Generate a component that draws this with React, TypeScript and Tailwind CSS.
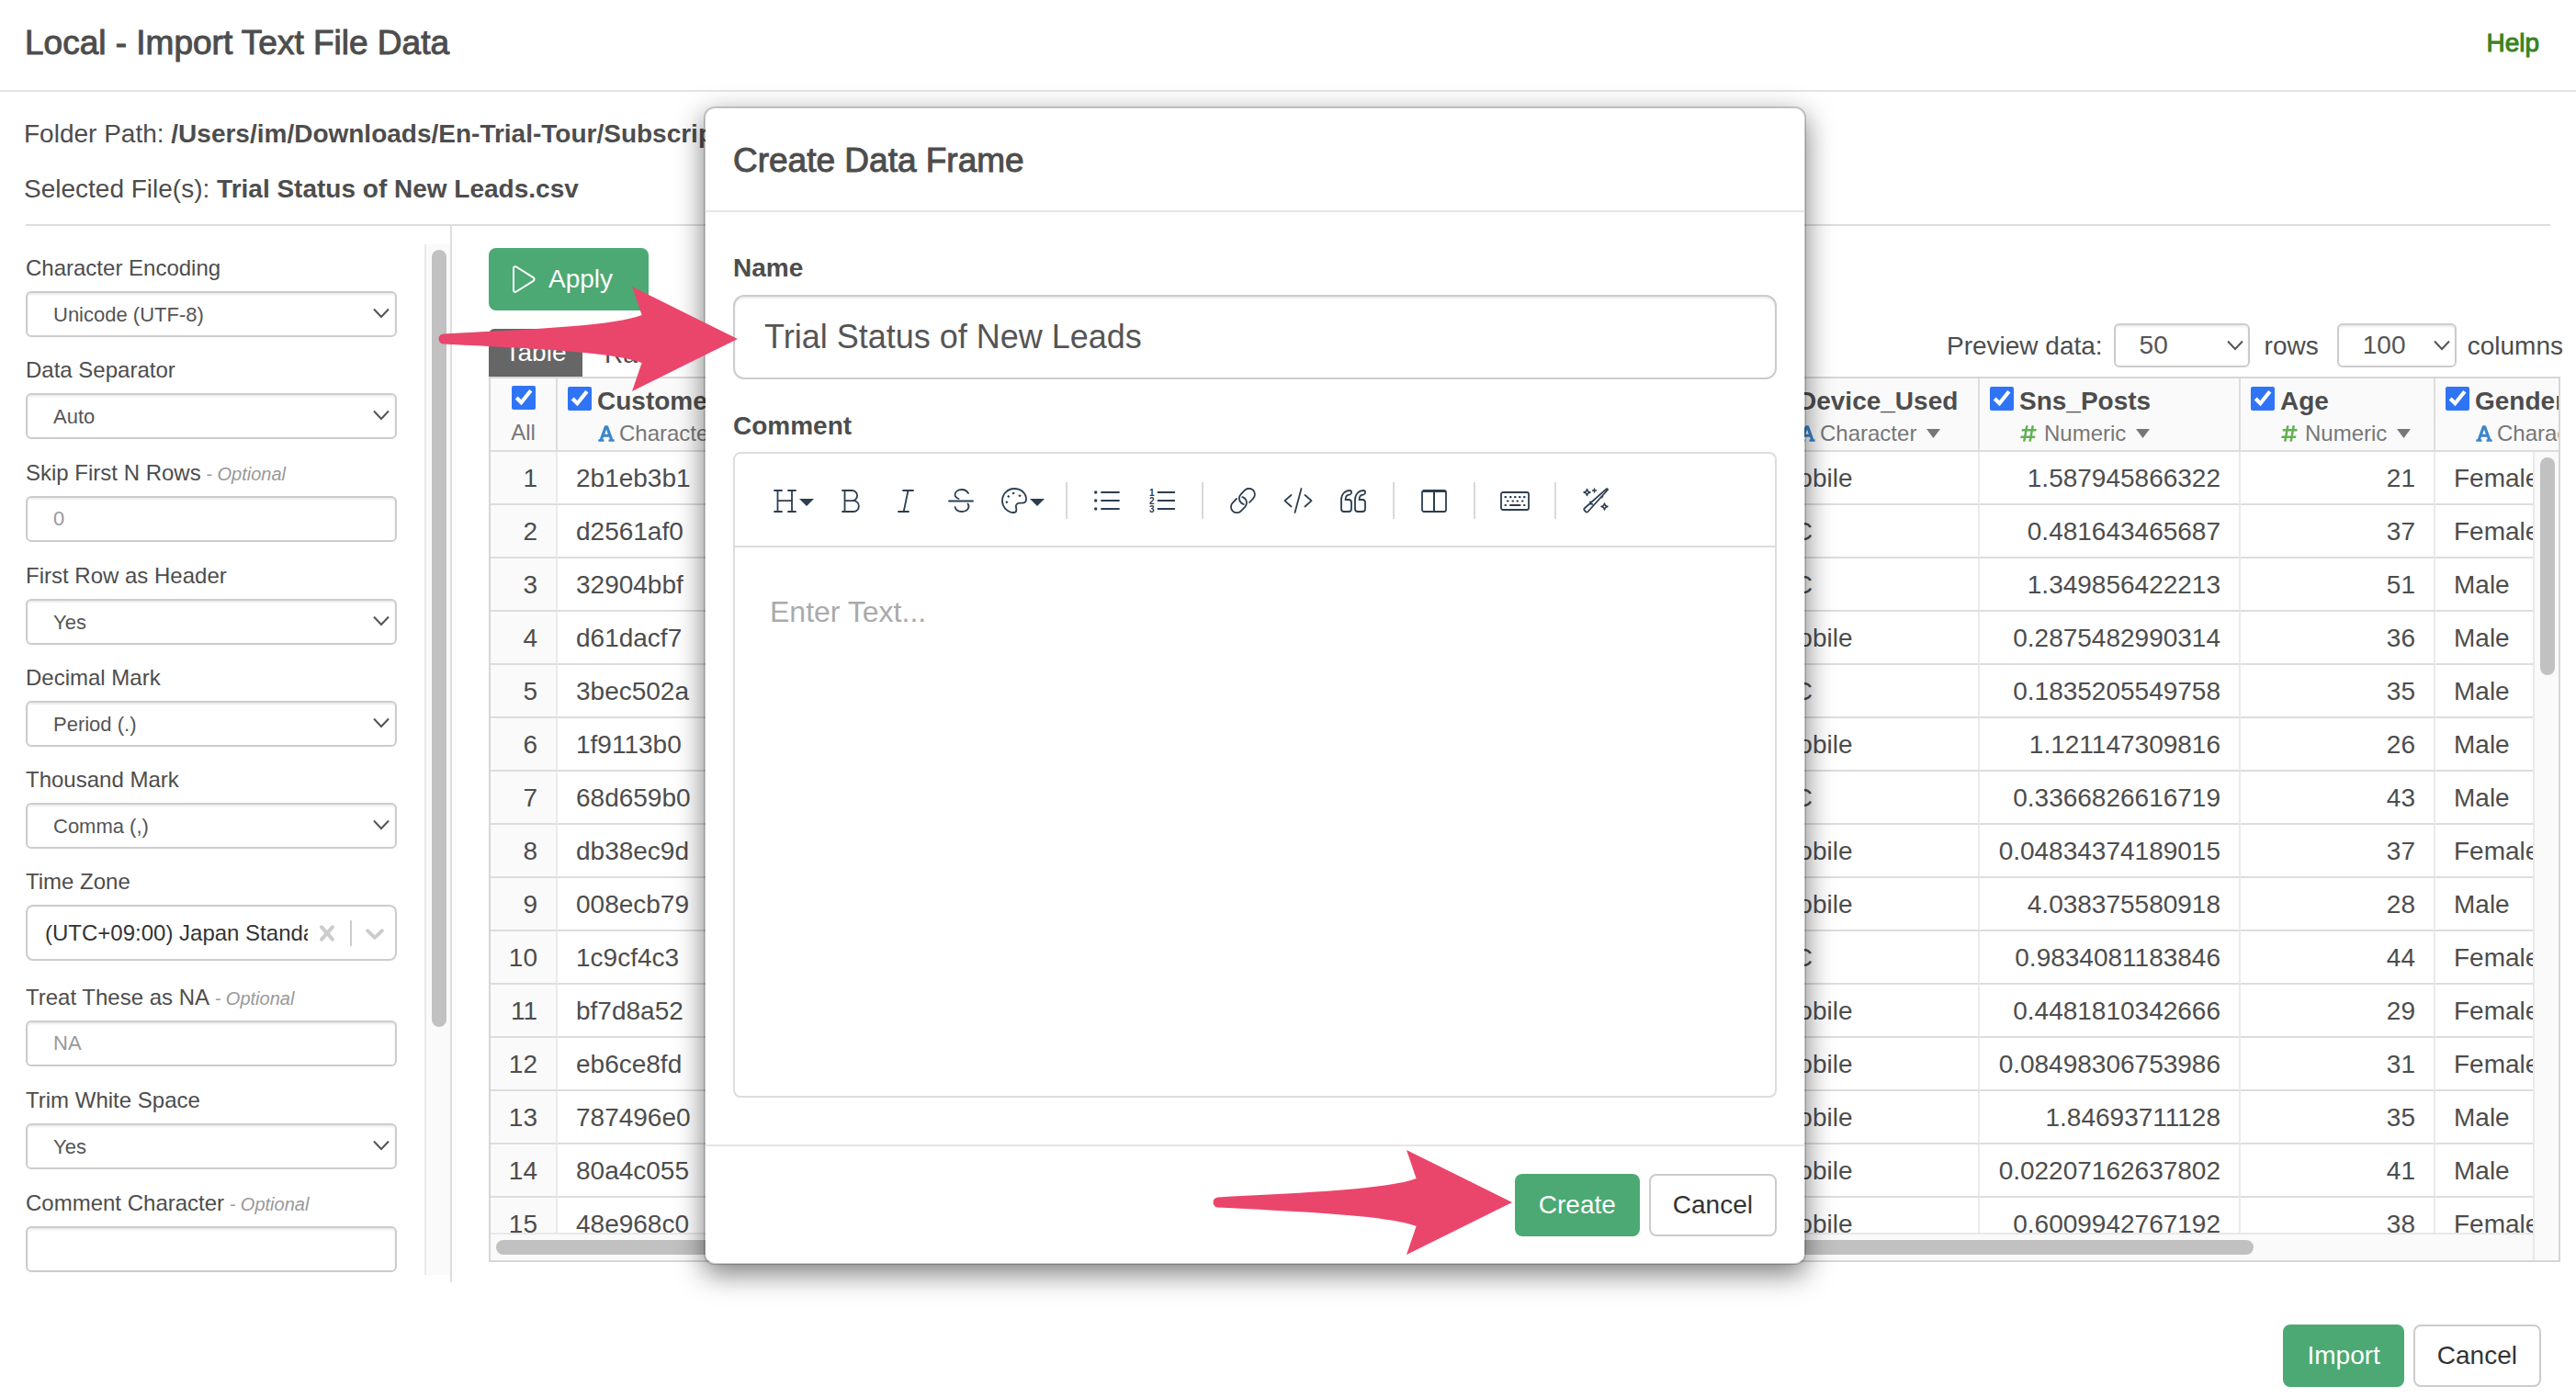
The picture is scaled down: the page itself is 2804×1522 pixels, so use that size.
import type { ReactNode } from 'react';
import { FaFont, FaHashtag } from 'react-icons/fa';

type Row = [string, string, string, string, string];

const rows: Row[] = [
  ['2b1eb3b1', 'Mobile', '1.587945866322', '21', 'Female'],
  ['d2561af0', 'PC', '0.481643465687', '37', 'Female'],
  ['32904bbf', 'PC', '1.349856422213', '51', 'Male'],
  ['d61dacf7', 'Mobile', '0.2875482990314', '36', 'Male'],
  ['3bec502a', 'PC', '0.1835205549758', '35', 'Male'],
  ['1f9113b0', 'Mobile', '1.121147309816', '26', 'Male'],
  ['68d659b0', 'PC', '0.3366826616719', '43', 'Male'],
  ['db38ec9d', 'Mobile', '0.04834374189015', '37', 'Female'],
  ['008ecb79', 'Mobile', '4.038375580918', '28', 'Male'],
  ['1c9cf4c3', 'PC', '0.9834081183846', '44', 'Female'],
  ['bf7d8a52', 'Mobile', '0.4481810342666', '29', 'Female'],
  ['eb6ce8fd', 'Mobile', '0.08498306753986', '31', 'Female'],
  ['787496e0', 'Mobile', '1.84693711128', '35', 'Male'],
  ['80a4c055', 'Mobile', '0.02207162637802', '41', 'Male'],
  ['48e968c0', 'Mobile', '0.6009942767192', '38', 'Female'],
];

const columns: { name: string; type: 'Character' | 'Numeric' }[] = [
  { name: 'Customer', type: 'Character' },
  { name: 'Device_Used', type: 'Character' },
  { name: 'Sns_Posts', type: 'Numeric' },
  { name: 'Age', type: 'Numeric' },
  { name: 'Gender', type: 'Character' },
];

function Chevron({ className }: { className: string }) {
  return (
    <svg viewBox="0 0 18 12" width="18" height="12" fill="none" stroke="#555" strokeWidth="2" className={className}>
      <path d="M1 1.5l8 8.5 8-8.5" />
    </svg>
  );
}

const fieldBox =
  'h-[50px] w-full appearance-none rounded-md border-2 border-[#ccc] bg-white px-7 text-[22px] text-[#555] placeholder:text-[#999] shadow-[inset_0_2px_2px_rgba(0,0,0,0.075)]';

function Label({ id, text, optional }: { id: string; text: string; optional?: boolean }) {
  return (
    <label htmlFor={id} className={`mb-2 block text-2xl ${optional ? 'leading-[35px]' : 'leading-[34px]'}`}>
      {text}
      {optional && <span className="text-xl italic text-[#999]"> - Optional</span>}
    </label>
  );
}

function SelectField({ id, label, value }: { id: string; label: string; value: string }) {
  return (
    <div className="mb-[19px]">
      <Label id={id} text={label} />
      <div className="relative">
        <select id={id} className={fieldBox}>
          <option>{value}</option>
        </select>
        <Chevron className="pointer-events-none absolute right-2 top-[18px]" />
      </div>
    </div>
  );
}

function TextField({ id, label, placeholder }: { id: string; label: string; placeholder?: string }) {
  return (
    <div className="mb-5">
      <Label id={id} text={label} optional />
      <input id={id} type="text" placeholder={placeholder} className={fieldBox} />
    </div>
  );
}

function TimeZoneField() {
  return (
    <div className="mb-[22px]">
      <Label id="tz" text="Time Zone" />
      <div className="flex h-[61px] items-center rounded-lg border-2 border-[#ccc] bg-white pl-[19px] pr-[5px] text-[#ccc]">
        <input id="tz" type="text" readOnly value="(UTC+09:00) Japan Standard Time" className="min-w-0 flex-1 text-2xl text-[#333]" />
        <button type="button" aria-label="Clear" className="ml-1">
          <svg width="34" height="34" viewBox="0 0 20 20" fill="currentColor">
            <path d="M14.348 14.849c-0.469 0.469-1.229 0.469-1.697 0l-2.651-3.030-2.651 3.029c-0.469 0.469-1.229 0.469-1.697 0-0.469-0.469-0.469-1.229 0-1.697l2.758-3.15-2.759-3.152c-0.469-0.469-0.469-1.228 0-1.697s1.228-0.469 1.697 0l2.652 3.031 2.651-3.031c0.469-0.469 1.228-0.469 1.697 0s0.469 1.229 0 1.697l-2.758 3.152 2.758 3.15c0.469 0.469 0.469 1.229 0 1.698z" />
          </svg>
        </button>
        <span className="mx-2 h-7 w-0.5 bg-[#ccc]" />
        <button type="button" aria-label="Open">
          <svg width="34" height="34" viewBox="0 0 20 20" fill="currentColor">
            <path d="M4.516 7.548c0.436-0.446 1.043-0.481 1.576 0l3.908 3.747 3.908-3.747c0.533-0.481 1.141-0.446 1.574 0 0.436 0.445 0.408 1.197 0 1.615-0.406 0.418-4.695 4.502-4.695 4.502-0.217 0.223-0.502 0.335-0.787 0.335s-0.57-0.112-0.789-0.335c0 0-4.287-4.084-4.695-4.502s-0.436-1.17 0-1.615z" />
          </svg>
        </button>
      </div>
    </div>
  );
}

function Sidebar() {
  return (
    <aside className="flex w-[492px] shrink-0 justify-between overflow-hidden border-r-2 border-[#ddd] pb-2 pl-7 pt-5">
      <form className="w-[404px] pt-[9px]">
        <SelectField id="encoding" label="Character Encoding" value="Unicode (UTF-8)" />
        <SelectField id="separator" label="Data Separator" value="Auto" />
        <TextField id="skip" label="Skip First N Rows" placeholder="0" />
        <SelectField id="header" label="First Row as Header" value="Yes" />
        <SelectField id="decimal" label="Decimal Mark" value="Period (.)" />
        <SelectField id="thousand" label="Thousand Mark" value="Comma (,)" />
        <TimeZoneField />
        <TextField id="na" label="Treat These as NA" placeholder="NA" />
        <SelectField id="trim" label="Trim White Space" value="Yes" />
        <TextField id="comment-char" label="Comment Character" />
      </form>
      <div className="w-7 border-l-2 border-[#e8e8e8] bg-[#fafafa] pl-1.5 pt-1.5">
        <div className="h-[846px] w-4 rounded-full bg-[#c1c1c1]" />
      </div>
    </aside>
  );
}

function PreviewSelect({ label, value, width }: { label: string; value: string; width: string }) {
  return (
    <span className={`relative ${width}`}>
      <select
        aria-label={label}
        className="h-12 w-full appearance-none rounded-md border-2 border-[#ccc] bg-white pl-[26px] text-[28px] text-[#555] shadow-[inset_0_2px_2px_rgba(0,0,0,0.075)]"
      >
        <option>{value}</option>
      </select>
      <Chevron className="pointer-events-none absolute right-[7px] top-[18px]" />
    </span>
  );
}

function Toolbar() {
  return (
    <div className="flex h-[72px] items-end justify-between">
      <div className="flex text-[28px]">
        <button type="button" className="h-[52px] w-[102px] rounded-t-md bg-[#666] text-white">
          Table
        </button>
        <button type="button" className="h-[52px] px-6 pt-1">
          Raw
        </button>
      </div>
      <div className="-mr-[3px] mb-2.5 flex items-center text-[28px]">
        <span className="pt-0.5">Preview data:</span>
        <PreviewSelect label="Preview rows" value="50" width="ml-3 w-[148px]" />
        <span className="ml-4 pt-0.5">rows</span>
        <PreviewSelect label="Preview columns" value="100" width="ml-5 w-[130px]" />
        <span className="ml-3 pt-0.5">columns</span>
      </div>
    </div>
  );
}

function ColumnHeader({ name, type }: { name: string; type: 'Character' | 'Numeric' }) {
  return (
    <div className="pl-[11px] pt-[9px]">
      <label className="flex h-8 items-start gap-1.5 whitespace-nowrap text-[28px] leading-8">
        <input type="checkbox" defaultChecked className="size-[26px] shrink-0 accent-[#3074f6]" />
        {name}
      </label>
      <button type="button" className="ml-8 mt-[5px] flex h-7 items-center text-2xl font-normal leading-7 text-[#777]">
        {type === 'Character' ? (
          <FaFont className="mr-1 size-5 text-[#3a86cc]" />
        ) : (
          <FaHashtag className="mr-[7px] size-5 text-[#62b152]" />
        )}
        {type}
        <svg width="15" height="10" viewBox="0 0 15 10" fill="#777" className="ml-[11px]">
          <path d="M0 0h15L7.500 10z" />
        </svg>
      </button>
    </div>
  );
}

function DataTable() {
  const cell = 'overflow-hidden border-b-2 border-r-2 border-[#ddd] border-r-[#ebebeb] whitespace-nowrap pt-0.5';
  return (
    <div className="relative mb-[22px] flex min-h-0 flex-1 flex-col overflow-hidden border-2 border-[#d6d6d6]">
      <div className="min-h-0 flex-1 overflow-hidden">
        <table className="w-full min-w-[1200px] table-fixed border-separate border-spacing-0 text-[28px]">
          <colgroup>
            <col className="w-[73px]" />
            <col />
            <col className="w-[241px]" />
            <col className="w-[284px]" />
            <col className="w-[212px]" />
            <col className="w-[134px]" />
          </colgroup>
          <thead>
            <tr className="h-20 bg-[#fafafa] text-left align-top">
              <th className="border-b-2 border-r-2 border-[#ddd] pt-2 text-center text-2xl font-normal text-[#777]">
                <label className="flex flex-col items-center gap-[11px] leading-7">
                  <input type="checkbox" defaultChecked className="size-[26px] accent-[#3074f6]" />
                  All
                </label>
              </th>
              {columns.map((c, i) => (
                <th
                  key={c.name}
                  className={
                    i < columns.length - 1
                      ? 'overflow-hidden border-b-2 border-r-2 border-[#ddd] p-0'
                      : 'overflow-hidden border-b-2 border-[#ddd] p-0'
                  }
                >
                  <ColumnHeader name={c.name} type={c.type} />
                </th>
              ))}
            </tr>
          </thead>
          <tbody>
            {rows.map((r, i) => (
              <tr key={r[0]} className="h-[58px]">
                <td className={`${cell} bg-[#fafafa] pr-5 text-right`}>{i + 1}</td>
                <td className={`${cell} pl-5`}>{r[0]}</td>
                <td className={`${cell} pl-5`}>{r[1]}</td>
                <td className={`${cell} pr-5 text-right`}>{r[2]}</td>
                <td className={`${cell} pr-5 text-right`}>{r[3]}</td>
                <td className="overflow-hidden whitespace-nowrap border-b-2 border-[#ddd] pl-5 pt-0.5">{r[4]}</td>
              </tr>
            ))}
          </tbody>
        </table>
      </div>
      <div className="h-[30px] shrink-0 border-t-2 border-[#e8e8e8] bg-[#fafafa] pl-1.5 pt-1.5">
        <div className="h-4 w-[calc(100%-332px)] rounded-full bg-[#c1c1c1]" />
      </div>
      <div className="absolute bottom-0 right-0 top-20 w-7 border-l-2 border-[#e8e8e8] bg-[#fafafa] pl-1.5 pt-1.5">
        <div className="h-[237px] w-4 rounded-full bg-[#c1c1c1]" />
      </div>
    </div>
  );
}

function Arrow({ className }: { className: string }) {
  return (
    <svg width="326" height="114" viewBox="0 0 326 114" fill="#ea466c" className={className}>
      <path d="M6 51.5C100 46.5 190 43 221.6 31L211 0l115 57-115 57 10.6-31C190 71 100 67.500 6 62.500a5.500 5.500 0 0 1 0-11z" />
    </svg>
  );
}

function Glyph({ w, h = 28, children }: { w: number; h?: number; children: ReactNode }) {
  return (
    <svg
      width={w}
      height={h}
      viewBox={`0 0 ${w} ${h}`}
      fill="none"
      stroke="#2c3e50"
      strokeWidth="1.8"
      strokeLinecap="round"
      strokeLinejoin="round"
    >
      {children}
    </svg>
  );
}

function Caret() {
  return (
    <svg width="16" height="8" viewBox="0 0 16 8" fill="#2c3e50" className="mt-1">
      <path d="M0 0h16L8 8z" />
    </svg>
  );
}

function Tool({ label, children }: { label: string; children: ReactNode }) {
  return (
    <button type="button" aria-label={label} className="flex h-10 w-[60px] items-center justify-center">
      {children}
    </button>
  );
}

function WideTool({ label, children }: { label: string; children: ReactNode }) {
  return (
    <button type="button" aria-label={label} className="flex h-10 items-center gap-[3px] pl-3.5 pr-2.5">
      {children}
      <Caret />
    </button>
  );
}

function Separator() {
  return <span className="mx-[13px] h-10 w-0.5 bg-[#d9d9d9]" />;
}

function QuoteMark({ x }: { x: number }) {
  return (
    <path
      transform={`translate(${x} 0)`}
      d="M10.500 1C5 1 1 5 1 11v10a3 3 0 0 0 3 3h5a3 3 0 0 0 3-3v-7a3 3 0 0 0-3-3H5.500C5.500 7.500 7.500 5.500 10.500 5.300 12.600 5 12.600 1 10.500 1z"
    />
  );
}

function EditorToolbar() {
  return (
    <div className="flex h-[102px] items-center border-b-2 border-[#ddd] pl-7 pt-0.5">
      <WideTool label="Heading">
        <Glyph w={25} h={25}>
          <path d="M1 1h8M16 1h8M1 24h8M16 24h8M4.500 1v23M20 1v23M4.500 12.200h15.500" />
        </Glyph>
      </WideTool>
      <Tool label="Bold">
        <Glyph w={20} h={25}>
          <path d="M1 1h10.500a5.600 5.600 0 0 1 0 11.200H3.500M11.500 12.200h1.500a5.900 5.900 0 0 1 0 11.800H1M3.500 1v23" />
        </Glyph>
      </Tool>
      <Tool label="Italic">
        <Glyph w={18} h={25}>
          <path d="M6 1h11M1 24h11M11.500 1L6.700 24" />
        </Glyph>
      </Tool>
      <Tool label="Strikethrough">
        <Glyph w={28}>
          <path d="M22 6C20.500 3.500 18 2 15 2 10.500 2 7.500 4.500 7.500 7.600c0 2 1.500 3.600 4 4.400M21.500 17.500C23.500 20 22.500 26 15 26c-4 0-6.500-1.500-7.500-5M1 14.500h26" />
        </Glyph>
      </Tool>
      <WideTool label="Text colour">
        <Glyph w={28}>
          <path d="M1 14A13 13 0 0 1 14 1c8 0 13 5.500 13 11.500 0 3-2 4.200-4.500 4.200H20c-3.500 0-4.700 2.300-4 4.800.5 2 1 5.500-2.500 5.500A13 13 0 0 1 1 14z" />
          <g fill="#2c3e50" strokeWidth="0.800">
            <circle cx="7.700" cy="9.500" r="0.900" />
            <circle cx="13" cy="6" r="0.900" />
            <circle cx="20" cy="8.700" r="0.900" />
            <circle cx="5.800" cy="15.700" r="0.900" />
          </g>
        </Glyph>
      </WideTool>
      <Separator />
      <Tool label="Bulleted list">
        <Glyph w={28} h={24}>
          <path d="M8 3h19M8 12h19M8 21h19" />
          <g fill="#2c3e50" stroke="none">
            <circle cx="1.700" cy="3" r="1.700" />
            <circle cx="1.700" cy="12" r="1.700" />
            <circle cx="1.700" cy="21" r="1.700" />
          </g>
        </Glyph>
      </Tool>
      <Tool label="Numbered list">
        <Glyph w={28} h={26}>
          <path d="M9.500 4h18M9.500 13h18M9.500 22h18" />
          <g fill="#2c3e50" stroke="none" fontSize="10" fontWeight="700" fontFamily="Liberation Sans">
            <text x="0" y="7.500">1</text>
            <text x="0" y="16.500">2</text>
            <text x="0" y="25.500">3</text>
          </g>
        </Glyph>
      </Tool>
      <Separator />
      <Tool label="Link">
        <Glyph w={28}>
          <path d="M21 16l4-4.200a6.400 6.400 0 0 0-9-9.200l-4.300 4.500a6.500 6.500 0 0 0 .4 9.400c.8.700 1.700 1.200 2.700 1.500M7 12l-4.200 4.300a6.300 6.300 0 0 0 9 9l4.400-4.500a6.500 6.500 0 0 0-.3-9.300c-.8-.700-1.700-1.200-2.700-1.400" />
        </Glyph>
      </Tool>
      <Tool label="Code">
        <Glyph w={32}>
          <path d="M8.500 8L1.500 14.200l7 6.300M23.500 8l7 6.200-7 6.300M19.500 1l-7 26" />
        </Glyph>
      </Tool>
      <Tool label="Quote">
        <Glyph w={29} h={25}>
          <QuoteMark x={0} />
          <QuoteMark x={15} />
        </Glyph>
      </Tool>
      <Separator />
      <Tool label="Columns">
        <Glyph w={28} h={25}>
          <rect x="1" y="1" width="26" height="23" rx="2" />
          <path d="M2 2h24M14 2v22" strokeWidth="2" />
        </Glyph>
      </Tool>
      <Separator />
      <Tool label="Keyboard">
        <Glyph w={32} h={21}>
          <rect x="1" y="1" width="30" height="19" rx="2" />
          <path d="M5.500 6.200h.5M11 6.200h.5M16 6.200h.5M21 6.200h.5M26 6.200h.5M8 10.500h.5M13.500 10.500h.5M18.500 10.500h.5M24 10.500h.5M5.500 15h.5M26 15h.5M11 15h10.500" strokeWidth="2.200" />
        </Glyph>
      </Tool>
      <Separator />
      <Tool label="Format">
        <Glyph w={28}>
          <path d="M25.500 1.300c1-.6 1.900.4 1.300 1.200L5.500 26c-.8.900-1.600.9-2.300.2l-1.500-1.600c-.7-.7-.6-1.600.2-2.300zM8 15.500l.3 2.200 2 .2M20.500 10.500l.8-1" />
          <path d="M4.500 1.500l1 2.500 2.500 1-2.500 1-1 2.500-1-2.500-2.500-1 2.500-1zM12.500 1v4M10.500 3h4M23.500 17l1 2.500 2.500 1-2.500 1-1 2.500-1-2.500-2.500-1 2.500-1z" strokeWidth="1.500" />
        </Glyph>
      </Tool>
    </div>
  );
}

function GreenButton({ children }: { children: ReactNode }) {
  return (
    <button type="button" className="h-[68px] rounded-lg bg-[#4ca973] px-[26px] text-[28px] text-white">
      {children}
    </button>
  );
}

function CancelButton() {
  return (
    <button type="button" className="h-[68px] rounded-lg border-2 border-[#ccc] bg-white px-6 text-[28px] text-[#333]">
      Cancel
    </button>
  );
}

function CreateDialog() {
  return (
    <div className="absolute inset-0 flex items-start justify-center pr-[72px] pt-[116px]">
      <section
        role="dialog"
        aria-label="Create Data Frame"
        className="relative w-[1200px] rounded-xl border-2 border-black/20 bg-white bg-clip-padding shadow-[0_10px_30px_rgba(0,0,0,0.5)]"
      >
        <header className="border-b-2 border-[#e5e5e5] px-[30px] pb-[34px] pt-[37px]">
          <h2 className="text-[37px] leading-10 [-webkit-text-stroke:1px]">Create Data Frame</h2>
        </header>
        <div className="px-[30px] pb-[51px] pt-[41px]">
          <label htmlFor="df-name" className="mb-[9px] block text-[28px] font-bold leading-10">
            Name
          </label>
          <input
            id="df-name"
            type="text"
            defaultValue="Trial Status of New Leads"
            className="block h-[92px] w-full rounded-xl border-2 border-[#ccc] px-8 text-4xl text-[#555] shadow-[inset_0_2px_2px_rgba(0,0,0,0.075)]"
          />
          <label htmlFor="df-comment" className="mb-2 mt-[31px] block text-[28px] font-bold leading-10">
            Comment
          </label>
          <div className="rounded-lg border-2 border-[#ddd]">
            <EditorToolbar />
            <textarea
              id="df-comment"
              placeholder="Enter Text..."
              className="block h-[597px] w-full resize-none px-[38px] py-12 text-[32px] leading-[44px] placeholder:text-[#aaa]"
            />
          </div>
        </div>
        <footer className="flex justify-end gap-2.5 border-t-2 border-[#e5e5e5] px-[30px] pb-[29px] pt-[30px]">
          <GreenButton>Create</GreenButton>
          <CancelButton />
        </footer>
        <Arrow className="absolute left-[-291px] top-[194px]" />
        <Arrow className="absolute bottom-[9px] right-[318px]" />
      </section>
    </div>
  );
}

export default function App() {
  return (
    <div className="relative flex h-screen flex-col overflow-hidden bg-white font-['Liberation_Sans',Arial,sans-serif] text-[#4d4d4d]">
      <header className="flex items-center justify-between border-b-2 border-[#e5e5e5] pb-[31px] pl-[27px] pr-10 pt-[27px]">
        <h1 className="text-[37px] leading-10 [-webkit-text-stroke:1px]">Local - Import Text File Data</h1>
        <a href="#help" className="text-[28px] leading-10 text-[#3a8220] [-webkit-text-stroke:1px]">
          Help
        </a>
      </header>
      <div className="mx-7 flex flex-col gap-5 border-b-2 border-[#ddd] pb-[18px] pt-[26px] text-[28px] leading-10">
        <p className="-ml-0.5 whitespace-nowrap">
          Folder Path: <b>/Users/im/Downloads/En-Trial-Tour/Subscription</b>
        </p>
        <p className="-ml-0.5 whitespace-nowrap">
          Selected File(s): <b>Trial Status of New Leads.csv</b>
        </p>
      </div>
      <div className="flex min-h-0 flex-1">
        <Sidebar />
        <main className="flex min-w-0 flex-1 flex-col pl-10 pr-[17px] pt-6">
          <button
            type="button"
            className="flex h-[68px] w-[174px] shrink-0 items-center gap-3.5 rounded-lg bg-[#4ca973] pl-[26px] text-[28px] text-white"
          >
            <svg width="25" height="30" viewBox="0 0 25 30" fill="none" stroke="white" strokeWidth="2" strokeLinejoin="round">
              <path d="M1 3.200C1 1.400 2.500.6 4 1.500l18.500 11.700c1.400.9 1.400 2.700 0 3.600L4 28.500c-1.500.9-3 .1-3-1.700z" />
            </svg>
            Apply
          </button>
          <Toolbar />
          <DataTable />
        </main>
      </div>
      <footer className="flex justify-end gap-2.5 pb-3 pr-[38px] pt-[46px]">
        <GreenButton>Import</GreenButton>
        <CancelButton />
      </footer>
      <CreateDialog />
    </div>
  );
}
